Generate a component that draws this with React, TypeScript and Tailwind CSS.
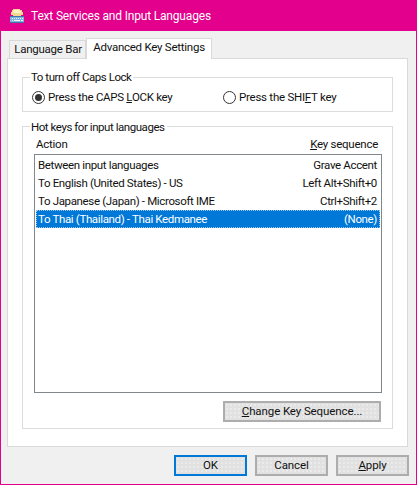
const ui = "font-['Roboto','Liberation_Sans',sans-serif]";

const buttonCls =
  "flex items-center justify-center whitespace-nowrap border-2 bg-[#e1e1e1] bg-[radial-gradient(#ebebeb_0.7px,transparent_0.8px)] bg-[length:4px_4px] text-[11.5px] leading-none tracking-[-0.1px] text-[#111111]";

function KeyboardIcon() {
  return (
    <svg width="16" height="16" viewBox="0 0 16 16" shapeRendering="crispEdges">
      <path d="M4 1h7v1h2v2h1v3h-2v1H4V7H2V4h1V2h1z" fill="#f5d98f" />
      <path d="M5 2h5v1h2v2H5V4H4V3h1z" fill="#fdf3c8" />
      <path d="M1 8h14v7H1z" fill="#7fb2dc" />
      <path d="M1 8h14v1H1zM1 14h14v1H1z" fill="#3f78b0" />
      <path d="M3 10h1v1H3zM5 10h1v1H5zM7 10h1v1H7zM9 10h1v1H9zM11 10h1v1h-1zM13 10h1v1h-1zM3 12h1v1H3zM5 12h6v1H5zM12 12h2v1h-2z" fill="#f2f7fb" />
    </svg>
  );
}

function Radio({ checked }: { checked?: boolean }) {
  return (
    <span className="flex h-[13px] w-[13px] shrink-0 items-center justify-center rounded-full border border-[#333333] bg-white">
      {checked ? <span className="h-[7px] w-[7px] rounded-full bg-[#333333]" /> : null}
    </span>
  );
}

const rows = [
  ["Between input languages", "Grave Accent"],
  ["To English (United States) - US", "Left Alt+Shift+0"],
  ["To Japanese (Japan) - Microsoft IME", "Ctrl+Shift+2"],
  ["To Thai (Thailand) - Thai Kedmanee", "(None)"],
];

export default function App() {
  return (
    <div className={`${ui} flex h-[485px] w-[417px] flex-col border border-[#e3008c] bg-[#f0f0f0] text-[11.5px] tracking-[-0.25px] text-[#111111]`}>
      <div className="flex h-[30px] shrink-0 items-center gap-[5px] bg-[#e3008c] pb-[1px] pl-[8px] text-[12px] tracking-[-0.18px] text-white">
        <KeyboardIcon />
        <span className="whitespace-nowrap pl-[1px]">Text Services and Input Languages</span>
      </div>

      <div className="flex items-end pl-[8px] pt-[7px]">
        <div className="flex h-[18px] w-[77px] items-center justify-center whitespace-nowrap border border-b-0 border-[#d9d9d9] bg-[#f0f0f0] pl-[1px]">
          Language Bar
        </div>
        <div className="z-10 -mb-[1px] flex h-[21px] w-[126px] items-center justify-center whitespace-nowrap border border-b-0 border-[#d9d9d9] bg-white pb-[2px]">
          Advanced Key Settings
        </div>
      </div>

      <div className="ml-[6px] flex h-[389px] w-[401px] flex-col border border-[#d9d9d9] bg-white px-[14px] pt-[18px]">
        <div className="relative h-[35px] w-[371px] border border-[#dcdcdc]">
          <span className="absolute left-[7px] top-[-9px] whitespace-nowrap bg-white pl-[1px] pr-[2px] leading-[16px] tracking-[-0.45px]">
            To turn off Caps Lock
          </span>
          <div className="flex h-full items-center pl-[9px] pt-[6px]">
            <Radio checked />
            <span className="ml-[3px] w-[175px] whitespace-nowrap tracking-[-0.3px]">
              Press the CAPS <u>L</u>OCK key
            </span>
            <Radio />
            <span className="ml-[3px] whitespace-nowrap">
              Press the SHI<u>F</u>T key
            </span>
          </div>
        </div>

        <div className="relative mt-[14px] flex h-[303px] w-[371px] flex-col border border-[#dcdcdc] px-[11px]">
          <span className="absolute left-[7px] top-[-8px] whitespace-nowrap bg-white pl-[1px] pr-[2px] leading-[16px] tracking-[-0.45px]">
            Hot keys for input languages
          </span>
          <div className="flex h-[27px] items-end justify-between pb-[2px] pl-[2px] pr-[3px] leading-[16px]">
            <span>Action</span>
            <span>
              <u>K</u>ey sequence
            </span>
          </div>
          <div className="h-[239px] w-[348px] border border-[#82878c] bg-white p-[1px] tracking-[-0.35px]">
            {rows.map(([action, keys], i) =>
              i === 3 ? (
                <div
                  key={action}
                  className="flex h-[18px] items-center justify-between border border-dotted border-[#9cc6ee] bg-[#0078d7] pl-[1px] pr-[2px] pt-[1px] text-white"
                >
                  <span>{action}</span>
                  <span>{keys}</span>
                </div>
              ) : (
                <div key={action} className="flex h-[18px] items-center justify-between pl-[2px] pr-[3px] pt-[1px]">
                  <span>{action}</span>
                  <span>{keys}</span>
                </div>
              ),
            )}
          </div>
          <div className="mt-[8px] flex justify-end">
            <button className={`${buttonCls} h-[21px] w-[158px] border-[#adadad]`}>
              <span>
                <u>C</u>hange Key Sequence...
              </span>
            </button>
          </div>
        </div>
      </div>

      <div className="flex justify-end gap-[8px] pr-[7px] pt-[8px]">
        <button className={`${buttonCls} h-[21px] w-[73px] border-[#0078d7]`}>OK</button>
        <button className={`${buttonCls} h-[21px] w-[73px] border-[#adadad]`}>Cancel</button>
        <button className={`${buttonCls} h-[21px] w-[73px] border-[#adadad]`}>
          <span>
            <u>A</u>pply
          </span>
        </button>
      </div>
    </div>
  );
}
